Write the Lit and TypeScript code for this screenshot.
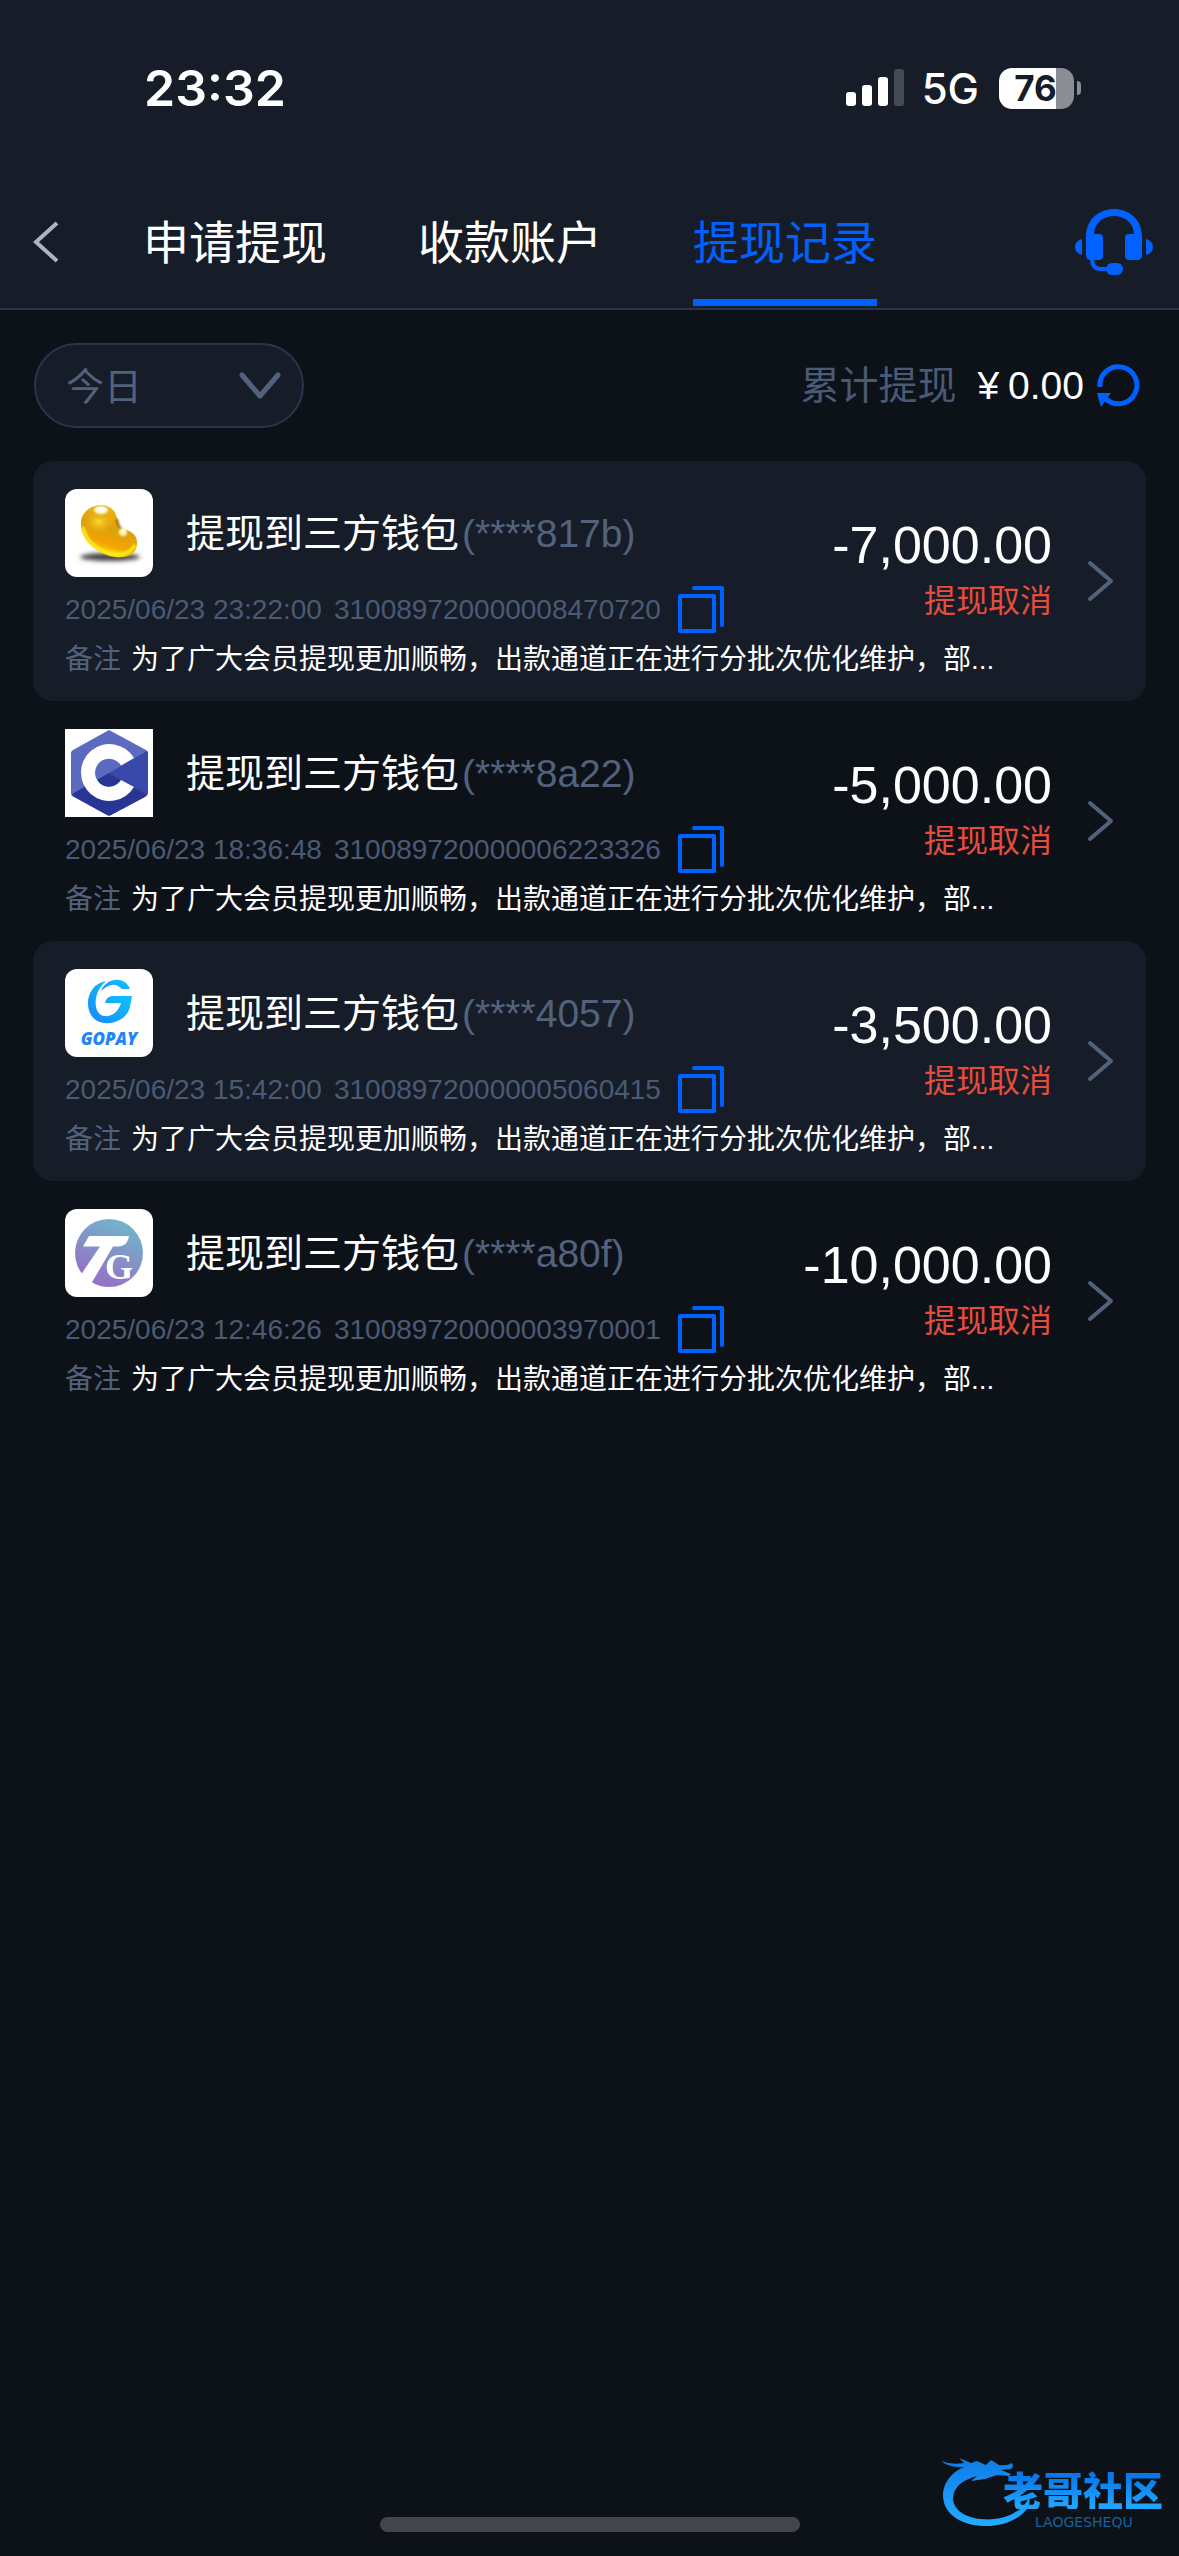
import { LitElement, html, css, svg } from "lit";
import { customElement, property } from "lit/decorators.js";

interface WithdrawalRecord {
  logo: string;
  wallet: string;
  time: string;
  order: string;
  amount: string;
}

const RECORDS: WithdrawalRecord[] = [
  { logo: "bean", wallet: "(****817b)", time: "2025/06/23 23:22:00", order: "310089720000008470720", amount: "-7,000.00" },
  { logo: "hex", wallet: "(****8a22)", time: "2025/06/23 18:36:48", order: "310089720000006223326", amount: "-5,000.00" },
  { logo: "gopay", wallet: "(****4057)", time: "2025/06/23 15:42:00", order: "310089720000005060415", amount: "-3,500.00" },
  { logo: "tg", wallet: "(****a80f)", time: "2025/06/23 12:46:26", order: "310089720000003970001", amount: "-10,000.00" },
];

@customElement("wallet-logo")
class WalletLogo extends LitElement {
  @property() kind = "bean";

  static styles = css`
    :host { display: block; width: 88px; height: 88px; }
    .logo { display: block; width: 100%; height: 100%; border-radius: 12px; background: #fff; }
    .square { border-radius: 0; }
    .gopay { font: italic 800 17px "Open Sans", sans-serif; }
    .serif { font: 700 36px "Liberation Serif", serif; }
  `;

  private art() {
    switch (this.kind) {
      case "hex":
        return svg`
          <path d="M44 1 L81 21 Q83 22 83 24 V64 Q83 66 81 67 L46 86 Q44 87 42 86 L7 67 Q6 66 6 64 V24 Q6 22 8 21 Z" fill="#5c6bc0"/>
          <path d="M7 65 L44 44 L82 65 Q82 67 80 68 L46 86 Q44 87 42 86 L8 67 Z" fill="#283593"/>
          <path d="M44 44 L82 22 Q83 23 83 25 V64 L82 66 Z" fill="#3949ab"/>
          <path d="M69 29 A28.500 28.500 0 1 0 69 58 L56 51 A14 14 0 1 1 56 36.500 Z" fill="#fff"/>`;
      case "gopay":
        return svg`
          <defs><linearGradient id="go" x1="0" y1="1" x2="1" y2="0">
            <stop offset="0" stop-color="#1787fb"/><stop offset="1" stop-color="#0bd0fb"/></linearGradient></defs>
          <path d="M36 22 C42 8 60 7 65 20 L57 20 C51 13 43 15 36 22 Z" fill="url(#go)"/>
          <path d="M41 12 C24 15 19 34 26 46 C35 60 61 55 65 38 L67 27 L47 27 Q41 28 40 34 L56 34 C53 44 46 48 39 47 C28 45 27 24 41 12 Z" fill="url(#go)"/>
          <text class="gopay" x="44" y="76" text-anchor="middle" fill="#1e86f5">GOPAY</text>`;
      case "tg":
        return svg`
          <defs><linearGradient id="tg" x1="0.200" y1="1" x2="0.700" y2="0">
            <stop offset="0" stop-color="#9b68c4"/><stop offset="1" stop-color="#6fb7cb"/></linearGradient></defs>
          <circle cx="44" cy="44" r="34" fill="url(#tg)"/>
          <path d="M24 27 H64 Q63 37 53 37.500 H48 L26 75 L15 67 L35 37.500 H18 Z" fill="#fff"/>
          <text class="serif" x="40" y="70" fill="#fff">G</text>`;
      default:
        return svg`
          <defs>
            <linearGradient id="bean" x1="0.700" y1="0" x2="0.400" y2="1">
              <stop offset="0" stop-color="#f0b90f"/><stop offset="0.450" stop-color="#dba10c"/>
              <stop offset="0.750" stop-color="#f3a400"/><stop offset="1" stop-color="#fdf211"/>
            </linearGradient>
            <radialGradient id="spot"><stop offset="0" stop-color="#fbdc28"/><stop offset="1" stop-color="#e9b013" stop-opacity="0"/></radialGradient>
            <filter id="soft" x="-30%" y="-100%" width="160%" height="300%"><feGaussianBlur stdDeviation="2"/></filter>
            <filter id="glow" x="-50%" y="-50%" width="200%" height="200%"><feGaussianBlur stdDeviation="1"/></filter>
          </defs>
          <ellipse cx="45" cy="68" rx="30" ry="4" fill="#444" filter="url(#soft)"/>
          <path d="M16 36 C15 24 25 16 37 16 C49 17 52 26 53 34 C54 41 58 39 64 42 C74 46 74 58 68 64 C60 71 44 69 32 61 C22 54 17 46 16 36 Z" fill="url(#bean)"/>
          <path d="M18 38 C20 50 30 60 44 64 C56 67 66 64 70 56" fill="none" stroke="#fff21c" stroke-width="3" filter="url(#glow)"/>
          <path d="M52 30 Q53 38 57 40" fill="none" stroke="#8a5b08" stroke-width="2" filter="url(#glow)"/>
          <ellipse cx="34" cy="33" rx="15" ry="11" fill="url(#spot)"/>
          <ellipse cx="36" cy="21" rx="7" ry="4" fill="#fffdf0" filter="url(#glow)"/>
          <circle cx="58" cy="43" r="4" fill="#fff8c8" filter="url(#glow)"/>`;
    }
  }

  render() {
    return html`<svg class="logo ${this.kind === "hex" ? "square" : ""}" viewBox="0 0 88 88" aria-hidden="true">${this.art()}</svg>`;
  }
}

@customElement("withdrawal-row")
class WithdrawalRow extends LitElement {
  @property({ attribute: false }) record!: WithdrawalRecord;

  static styles = css`
    :host { display: block; }
    * { box-sizing: border-box; }
    .row { display: flex; align-items: center; height: 240px; padding: 28px 32px; position: relative; }
    .info { flex: 1; min-width: 0; align-self: flex-start; }
    .top { display: flex; height: 88px; gap: 33px; align-items: center; }
    .title { display: flex; gap: 3px; padding-top: 1px; font-size: 39px; line-height: 56px; white-space: nowrap; margin: 0; font-weight: 400; }
    .muted { color: #53627c; }
    .meta { display: flex; align-items: center; height: 66px; gap: 12px; font-size: 28px; white-space: nowrap; color: #4b5a74; }
    .copy { display: block; width: 48px; height: 48px; padding: 0; margin-left: 4px; border: 0; background: none; }
    .copy svg { display: block; }
    .remark { display: flex; gap: 10px; margin: 0; font-size: 28px; line-height: 34px; white-space: nowrap; }
    .figures { position: absolute; right: 94px; top: 52px; text-align: right; }
    .amount { display: block; font-size: 52px; line-height: 64px; }
    .state { display: block; font-size: 32px; line-height: 48px; color: #e74c3c; }
    .open { display: block; width: 28px; height: 44px; padding: 0; border: 0; background: none; }
    .open svg { display: block; }
  `;

  render() {
    const r = this.record;
    return html`
      <article class="row">
        <div class="info">
          <div class="top">
            <wallet-logo kind=${r.logo}></wallet-logo>
            <h2 class="title"><span>提现到三方钱包</span><span class="muted">${r.wallet}</span></h2>
          </div>
          <div class="meta">
            <time>${r.time}</time><span>${r.order}</span>
            <button class="copy" aria-label="复制">
              <svg width="48" height="48" viewBox="0 0 48 48" fill="none" stroke="#0061ff" stroke-width="4" stroke-linejoin="round" stroke-linecap="round">
                <rect x="3" y="10" width="34" height="35"/><path d="M17 2 H45 V39"/>
              </svg>
            </button>
          </div>
          <p class="remark"><span class="muted">备注</span><span>为了广大会员提现更加顺畅，出款通道正在进行分批次优化维护，部...</span></p>
        </div>
        <div class="figures"><span class="amount">${r.amount}</span><span class="state">提现取消</span></div>
        <button class="open" aria-label="详情">
          <svg width="28" height="44" viewBox="0 0 28 44" fill="none" stroke="#53627c" stroke-width="4" stroke-linecap="round" stroke-linejoin="round"><path d="M4 4 L25 22 L4 40"/></svg>
        </button>
      </article>`;
  }
}

@customElement("app-root")
class AppRoot extends LitElement {
  static styles = css`
    :host {
      display: block; position: relative; min-height: 100vh; background: #0d1219; color: #fff;
      font-family: "Liberation Sans", "Noto Sans CJK SC", sans-serif;
    }
    * { box-sizing: border-box; }
    button, select { font-family: inherit; color: inherit; }
    .head { background: #161d28; border-bottom: 2px solid #27364c; }
    .status { display: flex; justify-content: space-between; align-items: center; height: 176px; padding: 0 98px 0 144px; font-family: Inter, sans-serif; }
    .clock { font-size: 50px; font-weight: 600; }
    .signals { display: flex; align-items: center; }
    .bars { display: block; margin-right: 18px; }
    .net { font-size: 42px; font-weight: 500; margin-right: 20px; }
    .battery { display: flex; align-items: center; gap: 3px; }
    .cell { display: flex; align-items: center; justify-content: center; width: 75px; height: 41px; padding-right: 2px; border-radius: 13px; background: linear-gradient(90deg, #fff 57px, #8b8d95 57px); color: #161d28; font-size: 35px; font-weight: 700; }
    .tip { width: 4px; height: 14px; border-radius: 0 4px 4px 0; background: #8b8d95; }
    .nav { display: flex; align-items: center; height: 132px; padding: 0 26px 0 30px; }
    .icon { display: block; flex: none; padding: 0; border: 0; background: none; }
    .icon svg { display: block; }
    .tabs { display: flex; flex: 1; align-self: stretch; gap: 91px; margin-left: 81px; }
    .tab { position: relative; padding: 2px 0 0; border: 0; background: none; font-size: 46px; line-height: 130px; white-space: nowrap; }
    .active { color: #0061ff; }
    .active::after { content: ""; position: absolute; left: 0; right: 0; bottom: 2px; height: 7px; background: #0061ff; }
    .filters { display: flex; justify-content: space-between; align-items: center; padding: 33px 39px 33px 34px; }
    .period { position: relative; display: block; }
    .period select { appearance: none; display: block; width: 270px; height: 85px; padding: 2px 30px 0; border: 2px solid #27364c; border-radius: 43px; background: #161d28; color: #53627c; font-size: 38px; }
    .period svg { position: absolute; right: 22px; top: 28px; pointer-events: none; }
    .total { display: flex; align-items: center; font-size: 39px; line-height: 56px; white-space: nowrap; }
    .total .label { color: #4b5a74; margin-right: 21px; }
    .total .sum { display: flex; gap: 9px; margin-right: 12px; }
    .list { margin: 0; padding: 0 33px; list-style: none; }
    .item { border-radius: 20px; }
    .item:nth-child(odd) { background: #161d28; }
    .home { position: absolute; left: 50%; bottom: 24px; width: 420px; height: 15px; margin-left: -210px; border-radius: 8px; background: #42454c; }
    .mark { position: absolute; right: 16px; bottom: 24px; display: flex; align-items: center; }
    .dragon { display: block; margin-right: -30px; }
    .brand { display: flex; flex-direction: column; align-items: flex-start; gap: 4px; padding-top: 16px; }
    .name { font: 900 40px/40px "Noto Sans CJK SC", sans-serif; background: linear-gradient(#0878ea 20%, #20a4ff 90%); background-clip: text; -webkit-background-clip: text; color: transparent; }
    .latin { margin-left: 32px; font: 14px/18px "DejaVu Sans", sans-serif; color: #17609f; }
  `;

  render() {
    return html`
      <header class="head">
        <div class="status">
          <span class="clock">23:32</span>
          <div class="signals">
            <svg class="bars" width="58" height="38" viewBox="0 0 58 38" aria-hidden="true">
              <g fill="#fff"><rect y="23" width="10" height="14" rx="3"/><rect x="16" y="16" width="10" height="21" rx="3"/><rect x="32" y="8" width="10" height="29" rx="3"/></g>
              <rect x="48" width="10" height="37" rx="3" fill="#454a54"/>
            </svg>
            <span class="net">5G</span>
            <span class="battery"><span class="cell">76</span><span class="tip"></span></span>
          </div>
        </div>
        <nav class="nav">
          <button class="icon" aria-label="返回">
            <svg width="32" height="44" viewBox="0 0 32 44" fill="none" stroke="#a9b5c6" stroke-width="4"><path d="M27 3 L6 22 L27 41"/></svg>
          </button>
          <div class="tabs">
            <button class="tab">申请提现</button>
            <button class="tab">收款账户</button>
            <button class="tab active" aria-current="page">提现记录</button>
          </div>
          <button class="icon" aria-label="客服">
            <svg width="78" height="66" viewBox="0 0 78 66" fill="#0061ff">
              <path d="M11 27 C12 -9 66 -9 67 27 V46 Q67 51 62 51 H54 Q50 51 50 47 V29 Q50 25 54 25 H59 C58 1 20 1 19 25 H24 Q28 25 28 29 V47 Q28 51 24 51 H16 Q11 51 11 46 Z"/>
              <path d="M7 30 Q0 32 0 38 Q0 44 7 46 Z M71 30 Q78 32 78 38 Q78 44 71 46 Z"/>
              <path d="M17 50 Q17 60 26 60 H34" fill="none" stroke="#0061ff" stroke-width="4"/>
              <rect x="31" y="54" width="17" height="12" rx="6"/>
            </svg>
          </button>
        </nav>
      </header>
      <main>
        <section class="filters">
          <label class="period">
            <select aria-label="日期范围"><option>今日</option></select>
            <svg width="44" height="30" viewBox="0 0 44 30" fill="none" stroke="#53627c" stroke-width="5" stroke-linecap="round" stroke-linejoin="round"><path d="M4 4 L22 25 L40 4"/></svg>
          </label>
          <div class="total">
            <span class="label">累计提现</span>
            <span class="sum"><span>¥</span><span>0.00</span></span>
            <button class="icon" aria-label="刷新">
              <svg width="44" height="44" viewBox="0 0 44 44" fill="none" stroke="#0061ff" stroke-width="5">
                <path d="M4 23 A18.500 18.500 0 1 1 9 34"/><path d="M1 29 H15 L5 43 Z" fill="#0061ff" stroke="none"/>
              </svg>
            </button>
          </div>
        </section>
        <ul class="list">
          ${RECORDS.map((r) => html`<li class="item"><withdrawal-row .record=${r}></withdrawal-row></li>`)}
        </ul>
      </main>
      <div class="home"></div>
      <div class="mark">
        <svg class="dragon" width="92" height="80" viewBox="0 0 92 80" aria-hidden="true">
          <defs><linearGradient id="dr" x1="0" y1="0" x2="0" y2="1"><stop offset="0" stop-color="#0f7be6"/><stop offset="1" stop-color="#22acff"/></linearGradient></defs>
          <path fill="url(#dr)" d="M0 9 Q10 13 23 11 L18 6 L30 11 L36 9 L45 13 L50 8 L58 13 Q66 14 71 11 Q73 15 70 17 L60 18 L70 22 L68 24 L56 23 L44 27 L30 29 L36 24 Q13 30 12 46 C12 72 70 76 86 49 L89 44 L88 54 C70 84 3 80 2 44 C2 27 16 17 24 15 Q8 16 0 9 Z"/>
        </svg>
        <div class="brand"><span class="name">老哥社区</span><span class="latin">LAOGESHEQU</span></div>
      </div>`;
  }
}
